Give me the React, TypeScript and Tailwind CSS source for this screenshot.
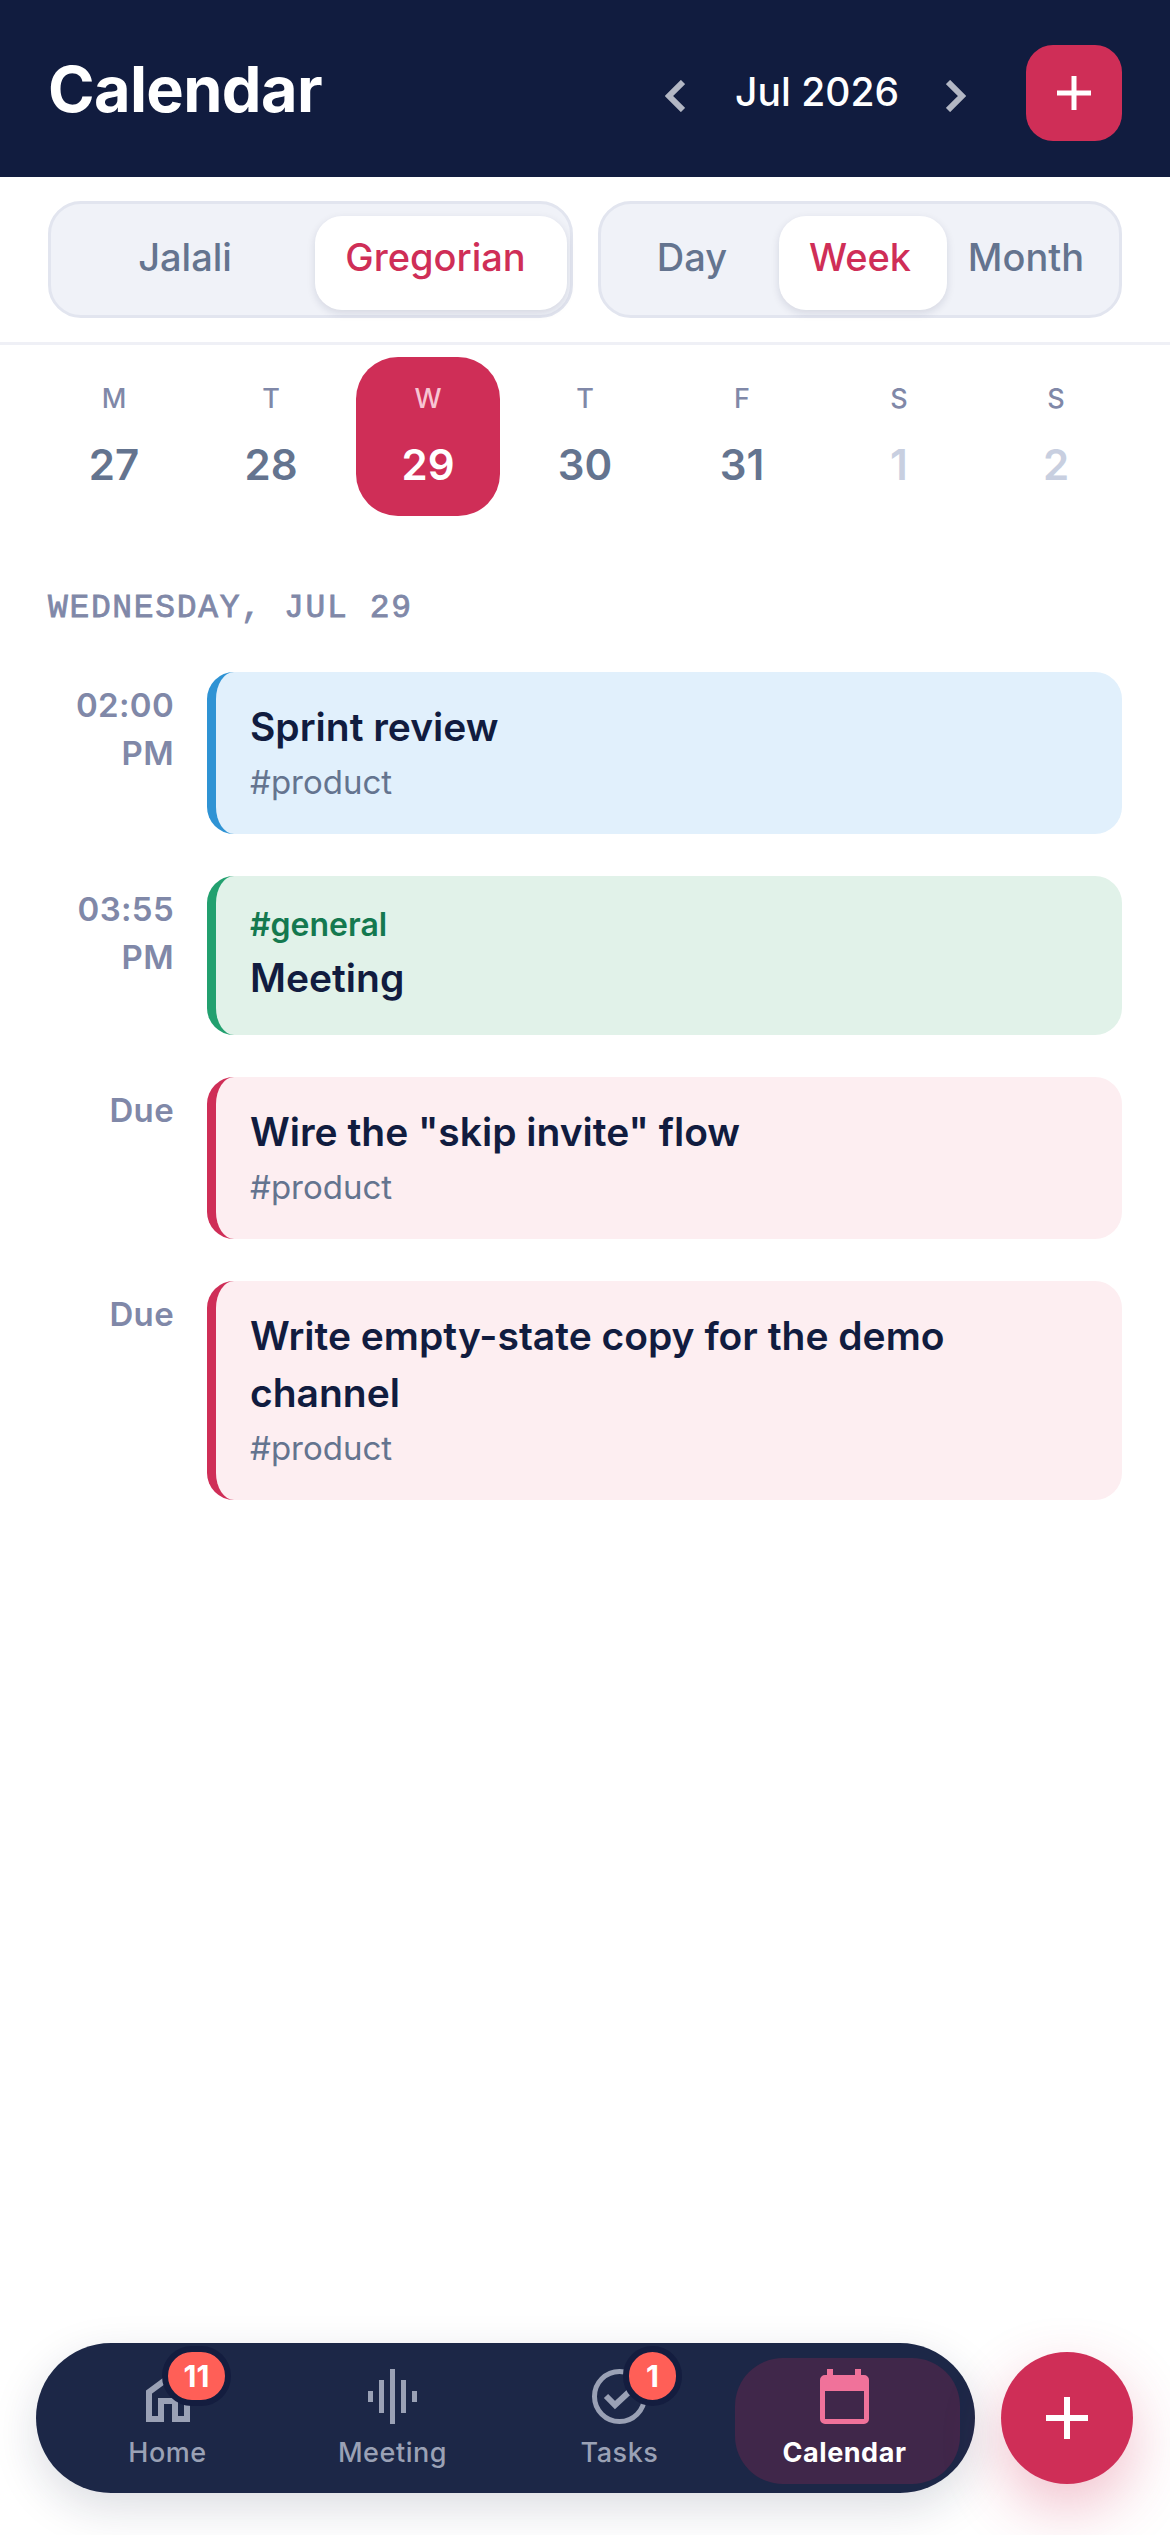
const sans = "font-['Inter','Liberation_Sans',sans-serif]";

type SegItem = { t: string; cls: string };

function Segment({ items, active, className }: { items: SegItem[]; active: string; className: string }) {
  return (
    <div className={`flex h-[117px] rounded-[33px] border-[3px] border-[#e2e5ef] bg-[#f0f2f8] pt-[12px] ${className}`}>
      {items.map(({ t, cls }) => (
        <div
          key={t}
          className={`flex h-[94px] shrink-0 items-start justify-center rounded-[27px] pt-[17px] text-[38px] leading-[48px] font-medium ${cls} ${
            t === active ? "bg-white text-[#cf2e57] shadow-[0_3px_9px_rgba(17,28,63,0.12)]" : "text-[#64748f]"
          }`}
        >
          {t}
        </div>
      ))}
    </div>
  );
}

function DayCell({ l, d, sel, dim }: { l: string; d: string; sel?: boolean; dim?: boolean }) {
  return (
    <div className={`flex h-[159px] flex-col items-center rounded-[42px] pt-[24px] ${sel ? "bg-[#cf2e57]" : ""}`}>
      <div className={`text-[27px] leading-[36px] font-medium ${sel ? "text-[#f7c5d3]" : "text-[#8088a8]"}`}>{l}</div>
      <div className={`mt-[21px] text-[42px] leading-[54px] font-semibold ${sel ? "text-white" : dim ? "text-[#c8cfe0]" : "text-[#64748f]"}`}>{d}</div>
    </div>
  );
}

function Event({ time, children, cls, h }: { time: string[]; children: React.ReactNode; cls: string; h: string }) {
  return (
    <div className="flex">
      <div className="w-[126px] shrink-0 pt-[9px] text-right text-[33px] leading-[48px] font-semibold tracking-[0.01em] text-[#8088a8]">
        {time.map((t) => (
          <div key={t}>{t}</div>
        ))}
      </div>
      <div className={`ml-[33px] flex flex-1 flex-col justify-center rounded-[27px] border-l-[9px] pr-[36px] pb-[2px] pl-[34px] ${h} ${cls}`}>{children}</div>
    </div>
  );
}

const Title = ({ children, className = "" }: { children: React.ReactNode; className?: string }) => (
  <div className={`text-[39px] leading-[57px] font-semibold text-[#111c3f] ${className}`}>{children}</div>
);
const Sub = ({ children }: { children: React.ReactNode }) => (
  <div className="mt-[3px] text-[33px] leading-[48px] text-[#64748f]">{children}</div>
);

function Badge({ n, cls }: { n: string; cls: string }) {
  return (
    <div className={`absolute top-[-12px] flex h-[60px] items-center justify-center rounded-full border-[6px] border-[#141d3f] bg-[#ff5f57] text-[30px] font-bold text-white ${cls}`}>
      {n}
    </div>
  );
}

function Tab({ label, icon, active, badge, className = "" }: { label: string; icon: React.ReactNode; active?: boolean; badge?: React.ReactNode; className?: string }) {
  return (
    <div className={`relative flex h-[126px] w-[225px] shrink-0 flex-col items-center rounded-[48px] pt-[11px] ${active ? "bg-[#40274a] pr-[6px]" : ""} ${className}`}>
      <div className="flex h-[55px] items-center justify-center">{icon}</div>
      <div className={`mt-[11px] text-[27px] leading-[36px] tracking-[0.02em] ${active ? "font-bold text-white" : "font-medium text-[#9aa1b5]"}`}>{label}</div>
      {badge}
    </div>
  );
}

export default function App() {
  return (
    <div className={`relative h-[2535px] w-[1170px] overflow-hidden bg-white ${sans}`}>
      <header className="flex h-[177px] items-center bg-[#111c3f] px-[48px] pt-[9px]">
        <h1 className="mt-[-8px] text-[63px] leading-[72px] font-bold tracking-[-0.01em] text-white">Calendar</h1>
        <div className="ml-auto flex items-center">
          <svg width="20" height="32" viewBox="0 0 20 32" fill="none" className="mt-[6px]">
            <path d="M18 2 4 16l14 14" stroke="#b3b7c4" strokeWidth="6" />
          </svg>
          <div className="mr-[47px] mb-[3px] ml-[50px] text-[39px] leading-[48px] font-medium text-white">Jul 2026</div>
          <svg width="20" height="32" viewBox="0 0 20 32" fill="none" className="mt-[6px]">
            <path d="M2 2l14 14L2 30" stroke="#b3b7c4" strokeWidth="6" />
          </svg>
          <div className="ml-[60px] flex h-[96px] w-[96px] items-center justify-center rounded-[27px] bg-[#cf2e57]">
            <svg width="34" height="34" viewBox="0 0 34 34" stroke="white" strokeWidth="5">
              <path d="M17 0v34M0 17h34" />
            </svg>
          </div>
        </div>
      </header>

      <div className="flex gap-[25px] border-b-[3px] border-[#eff0f6] px-[48px] pt-[24px] pb-[24px]">
        <Segment
          items={[
            { t: "Jalali", cls: "w-[250px]" },
            { t: "Gregorian", cls: "ml-[5px] w-[252px] pr-[11px]" },
          ]}
          active="Gregorian"
          className="w-[525px] pl-[9px]"
        />
        <Segment
          items={[
            { t: "Day", cls: "w-[168px]" },
            { t: "Week", cls: "ml-[3px] w-[168px] pr-[6px]" },
            { t: "Month", cls: "ml-[3px] w-[152px]" },
          ]}
          active="Week"
          className="w-[524px] pl-[7px]"
        />
      </div>

      <div className="grid grid-cols-7 gap-[13px] px-[42px] pt-[12px]">
        <DayCell l="M" d="27" />
        <DayCell l="T" d="28" />
        <DayCell l="W" d="29" sel />
        <DayCell l="T" d="30" />
        <DayCell l="F" d="31" />
        <DayCell l="S" d="1" dim />
        <DayCell l="S" d="2" dim />
      </div>

      <div className="mt-[72px] pl-[48px] font-['Liberation_Mono',monospace] text-[33px] leading-[42px] font-normal tracking-[0.05em] text-[#8088a8] [-webkit-text-stroke:0.8px_#8088a8]">
        WEDNESDAY, JUL 29
      </div>

      <div className="mt-[42px] flex flex-col gap-[42px] px-[48px]">
        <Event time={["02:00", "PM"]} cls="border-[#2f93d4] bg-[#e1f0fc]" h="h-[162px]">
          <Title>Sprint review</Title>
          <Sub>#product</Sub>
        </Event>
        <Event time={["03:55", "PM"]} cls="border-[#22a06f] bg-[#e1f2e9]" h="h-[159px]">
          <div className="text-[32px] leading-[42px] font-semibold text-[#14794f]">#general</div>
          <Title className="mt-[3px]">Meeting</Title>
        </Event>
        <Event time={["Due"]} cls="border-[#cf2e57] bg-[#fdeef1]" h="h-[162px]">
          <Title>Wire the "skip invite" flow</Title>
          <Sub>#product</Sub>
        </Event>
        <Event time={["Due"]} cls="border-[#cf2e57] bg-[#fdeef1]" h="h-[219px]">
          <Title>Write empty-state copy for the demo channel</Title>
          <Sub>#product</Sub>
        </Event>
      </div>

      <nav className="absolute top-[2343px] left-[36px] flex h-[150px] w-[939px] items-start rounded-full bg-[#1c2747] pt-[15px] pl-[19px] shadow-[0_15px_45px_rgba(17,28,63,0.15)]">
        <Tab
          label="Home"
          icon={
            <svg width="44" height="48" viewBox="0 0 44 48" fill="none" stroke="#9aa1b5" strokeWidth="6" className="mt-[3px]">
              <path d="M3 45V18L22 4l19 14v27H29V27H15v18Z" />
            </svg>
          }
          badge={<Badge n="11" cls="left-[107px] w-[69px]" />}
        />
        <Tab
          label="Meeting"
          icon={
            <svg width="52" height="55" viewBox="0 0 52 55" fill="#9aa1b5">
              <rect x="1" y="22" width="5" height="11" />
              <rect x="12" y="11" width="5" height="33" />
              <rect x="23" y="0" width="5" height="55" />
              <rect x="34" y="11" width="5" height="33" />
              <rect x="45" y="22" width="5" height="11" />
            </svg>
          }
        />
        <Tab
          className="ml-[2px]"
          label="Tasks"
          icon={
            <svg width="55" height="55" viewBox="0 0 55 55" fill="none">
              <circle cx="27.5" cy="27.5" r="25" stroke="#9aa1b5" strokeWidth="5" />
              <path d="M14 27l9 9 14-13" stroke="#9aa1b5" strokeWidth="6" />
            </svg>
          }
          badge={<Badge n="1" cls="left-[116px] w-[59px]" />}
        />
        <Tab
          active
          className="ml-[3px]"
          label="Calendar"
          icon={
            <svg width="49" height="55" viewBox="0 0 49 55" fill="none">
              <path d="M7 0h6v6h22V0h6v6h3a5 5 0 0 1 5 5v39a5 5 0 0 1-5 5H5a5 5 0 0 1-5-5V11a5 5 0 0 1 5-5h2V0Z" fill="#f0729a" />
              <rect x="5" y="22" width="39" height="28" fill="#40274a" />
            </svg>
          }
        />
      </nav>

      <div className="absolute top-[2352px] left-[1001px] flex h-[132px] w-[132px] items-center justify-center rounded-full bg-[#cf2e57] shadow-[0_24px_60px_rgba(207,46,87,0.3)]">
        <svg width="42" height="42" viewBox="0 0 42 42" stroke="white" strokeWidth="6">
          <path d="M21 0v42M0 21h42" />
        </svg>
      </div>
    </div>
  );
}
